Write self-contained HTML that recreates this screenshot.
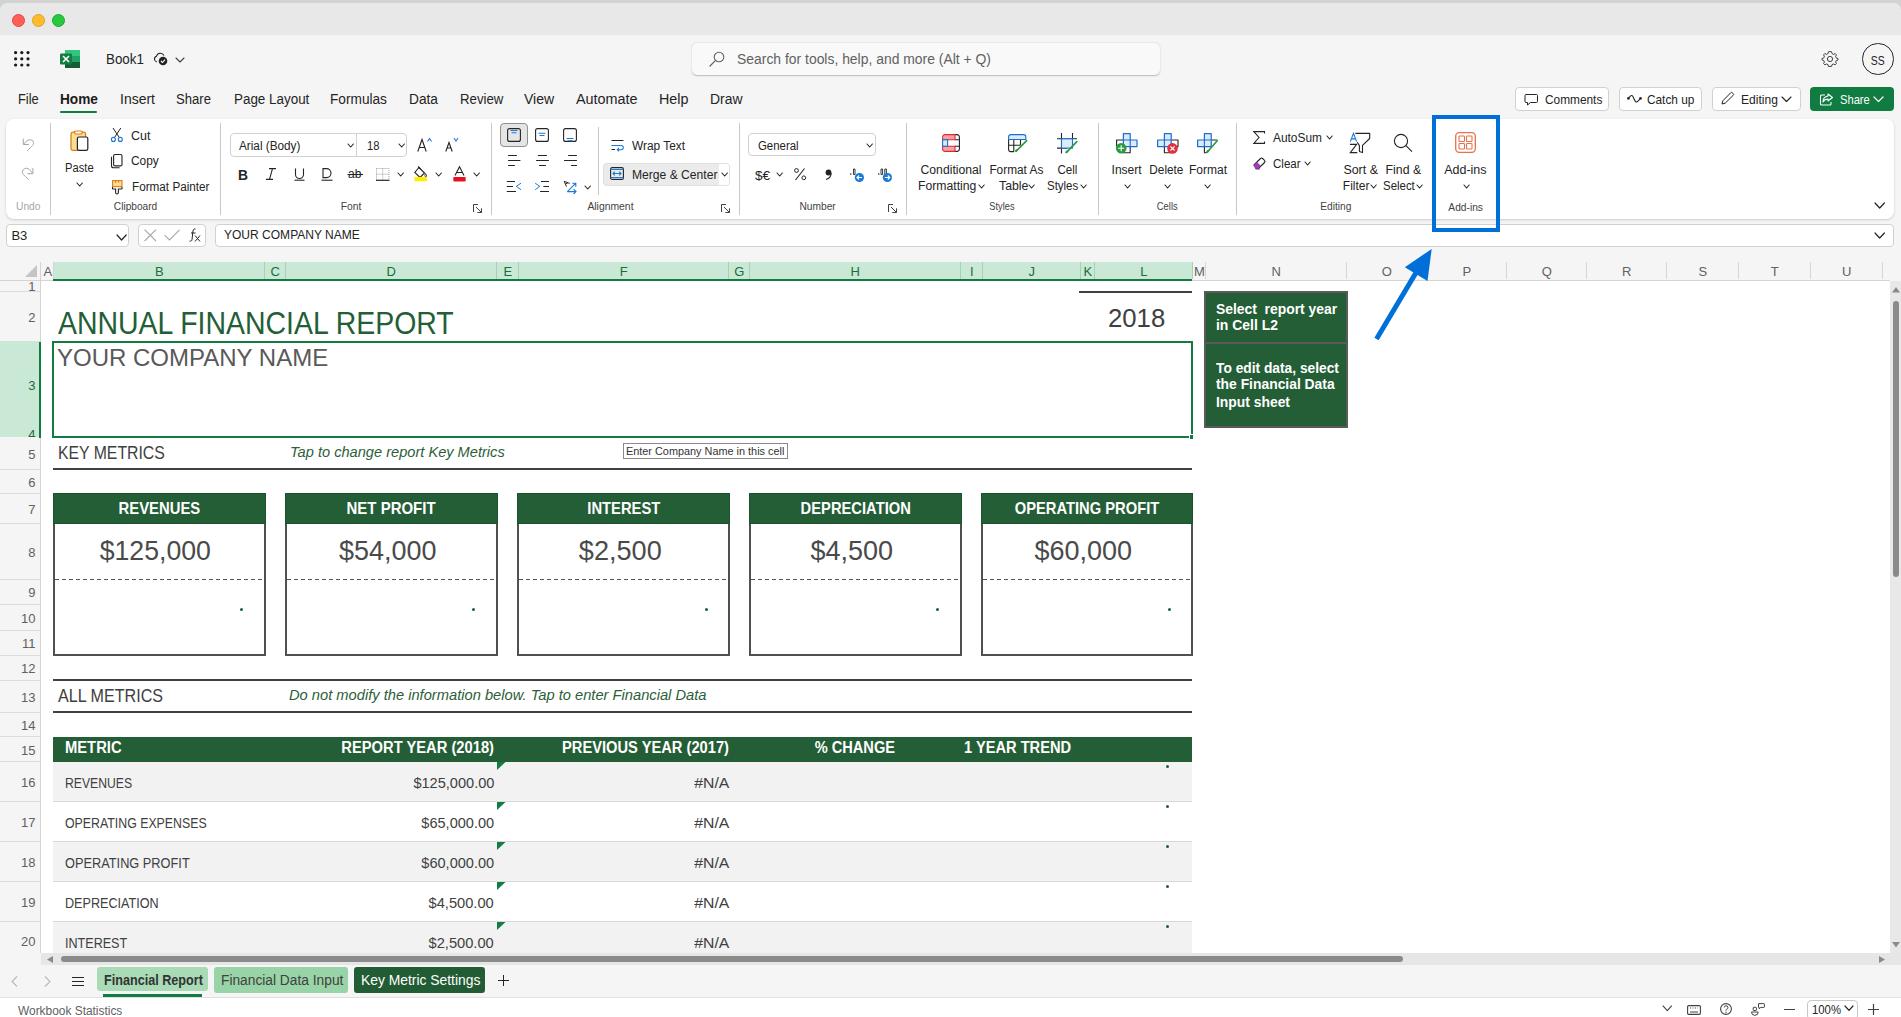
<!DOCTYPE html><html><head><meta charset="utf-8"><style>
html,body{margin:0;padding:0;width:1901px;height:1017px;overflow:hidden;background:#f5f5f5;font-family:"Liberation Sans",sans-serif;position:relative}
body>*{position:absolute}
svg{position:absolute;overflow:visible}
</style></head><body><div style="position:absolute;left:0px;top:0px;width:1901px;height:35px;background:#d2d2d2"></div><div style="position:absolute;left:0px;top:3px;width:1901px;height:32px;background:#e8e8e8;border-radius:7px 7px 0 0"></div><div style="position:absolute;left:11.5px;top:13.5px;width:13px;height:13px;background:#ff5f57;border-radius:50%;box-sizing:border-box;border:0.5px solid #e2463f"></div><div style="position:absolute;left:31.5px;top:13.5px;width:13px;height:13px;background:#febc2e;border-radius:50%;box-sizing:border-box;border:0.5px solid #e1a116"></div><div style="position:absolute;left:51.5px;top:13.5px;width:13px;height:13px;background:#28c840;border-radius:50%;box-sizing:border-box;border:0.5px solid #1aab29"></div><svg style="left:14px;top:51px;" width="16" height="16" viewBox="0 0 16 16"><circle cx="1.6" cy="1.6" r="1.6" fill="#1b1b1b"/><circle cx="1.6" cy="7.8" r="1.6" fill="#1b1b1b"/><circle cx="1.6" cy="14.0" r="1.6" fill="#1b1b1b"/><circle cx="7.8" cy="1.6" r="1.6" fill="#1b1b1b"/><circle cx="7.8" cy="7.8" r="1.6" fill="#1b1b1b"/><circle cx="7.8" cy="14.0" r="1.6" fill="#1b1b1b"/><circle cx="14.0" cy="1.6" r="1.6" fill="#1b1b1b"/><circle cx="14.0" cy="7.8" r="1.6" fill="#1b1b1b"/><circle cx="14.0" cy="14.0" r="1.6" fill="#1b1b1b"/></svg><svg style="left:60px;top:50px;" width="20" height="18" viewBox="0 0 20 18"><rect x="5" y="0" width="15" height="18" rx="1" fill="#21a366"/>
    <rect x="5" y="0" width="15" height="6" rx="1" fill="#33c481"/><rect x="5" y="12" width="15" height="6" fill="#185c37"/><rect x="12" y="6" width="8" height="6" fill="#21a366"/>
    <rect x="5" y="6" width="7" height="6" fill="#107c41"/><rect x="0" y="3.5" width="12" height="11" rx="1" fill="#107c41"/>
    <path d="M3 6 L9 12 M9 6 L3 12" stroke="#fff" stroke-width="1.6"/></svg><span id="t0" style="position:absolute;top:52.15px;font-size:14px;line-height:14px;color:#242424;font-weight:400;white-space:nowrap;font-family:'Liberation Sans', sans-serif;left:105.7px;transform:scaleX(0.9555);transform-origin:left;">Book1</span><svg style="left:153px;top:51px;" width="15" height="15" viewBox="0 0 15 15"><path d="M4 11 A3 3 0 0 1 3.5 5.2 A4 4 0 0 1 11 4.5" fill="none" stroke="#242424" stroke-width="1.1"/><circle cx="10" cy="10" r="4.3" fill="#242424"/><path d="M8 10 L9.5 11.5 L12 8.7" stroke="#fff" stroke-width="1.1" fill="none"/></svg><svg style="left:175.0px;top:57.0px;" width="10" height="6" viewBox="0 0 10 6"><path d="M1 1 L5.0 5 L9 1" fill="none" stroke="#424242" stroke-width="1.1" stroke-linecap="round" stroke-linejoin="round"/></svg><div style="position:absolute;left:692px;top:43px;width:468px;height:32px;background:#f9f9f9;border-radius:5px;box-shadow:0 0.5px 1.5px rgba(0,0,0,0.25)"></div><svg style="left:709px;top:51px;" width="16" height="16" viewBox="0 0 16 16"><circle cx="10" cy="6" r="4.8" fill="none" stroke="#616161" stroke-width="1.1"/><path d="M6.6 9.4 L1 15" stroke="#616161" stroke-width="1.2" stroke-linecap="round"/></svg><span id="t1" style="position:absolute;top:52.15px;font-size:14px;line-height:14px;color:#616161;font-weight:400;white-space:nowrap;font-family:'Liberation Sans', sans-serif;left:737px;transform:scaleX(0.9935);transform-origin:left;">Search for tools, help, and more (Alt + Q)</span><svg style="left:1821px;top:50px;" width="18" height="18" viewBox="0 0 18 18"><circle cx="9" cy="9" r="2.6" fill="none" stroke="#424242" stroke-width="1"/><path d="M9 1.5 L10.6 1.8 L11 3.6 L12.6 4.4 L14.2 3.5 L15.4 4.8 L14.6 6.4 L15.3 8 L17 8.5 V10 L15.3 10.5 L14.6 12 L15.4 13.6 L14.2 14.8 L12.6 14 L11 14.6 L10.6 16.4 H7.4 L7 14.6 L5.4 14 L3.8 14.8 L2.6 13.6 L3.4 12 L2.7 10.5 L1 10 V8.5 L2.7 8 L3.4 6.4 L2.6 4.8 L3.8 3.5 L5.4 4.4 L7 3.6 L7.4 1.8 Z" fill="none" stroke="#424242" stroke-width="1" stroke-linejoin="round"/></svg><div style="position:absolute;left:1862px;top:43px;width:31.5px;height:31.5px;border:1px solid #242424;border-radius:50%;box-sizing:border-box"></div><span id="t2" style="position:absolute;top:53.50px;font-size:13px;line-height:13px;color:#242424;font-weight:400;white-space:nowrap;font-family:'Liberation Sans', sans-serif;left:1869.33px;transform:scaleX(0.8032);transform-origin:center;">SS</span><span id="t3" style="position:absolute;top:92.35px;font-size:14px;line-height:14px;color:#242424;font-weight:400;white-space:nowrap;font-family:'Liberation Sans', sans-serif;left:17.6px;transform:scaleX(0.9174);transform-origin:left;">File</span><span id="t4" style="position:absolute;top:92.35px;font-size:14px;line-height:14px;color:#1b1b1b;font-weight:700;white-space:nowrap;font-family:'Liberation Sans', sans-serif;left:60.4px;transform:scaleX(0.9756);transform-origin:left;">Home</span><span id="t5" style="position:absolute;top:92.35px;font-size:14px;line-height:14px;color:#242424;font-weight:400;white-space:nowrap;font-family:'Liberation Sans', sans-serif;left:120px;">Insert</span><span id="t6" style="position:absolute;top:92.35px;font-size:14px;line-height:14px;color:#242424;font-weight:400;white-space:nowrap;font-family:'Liberation Sans', sans-serif;left:176.4px;transform:scaleX(0.9346);transform-origin:left;">Share</span><span id="t7" style="position:absolute;top:92.35px;font-size:14px;line-height:14px;color:#242424;font-weight:400;white-space:nowrap;font-family:'Liberation Sans', sans-serif;left:233.6px;transform:scaleX(0.9582);transform-origin:left;">Page Layout</span><span id="t8" style="position:absolute;top:92.35px;font-size:14px;line-height:14px;color:#242424;font-weight:400;white-space:nowrap;font-family:'Liberation Sans', sans-serif;left:330.4px;transform:scaleX(0.9760);transform-origin:left;">Formulas</span><span id="t9" style="position:absolute;top:92.35px;font-size:14px;line-height:14px;color:#242424;font-weight:400;white-space:nowrap;font-family:'Liberation Sans', sans-serif;left:409px;transform:scaleX(0.9791);transform-origin:left;">Data</span><span id="t10" style="position:absolute;top:92.35px;font-size:14px;line-height:14px;color:#242424;font-weight:400;white-space:nowrap;font-family:'Liberation Sans', sans-serif;left:459.6px;transform:scaleX(0.9438);transform-origin:left;">Review</span><span id="t11" style="position:absolute;top:92.35px;font-size:14px;line-height:14px;color:#242424;font-weight:400;white-space:nowrap;font-family:'Liberation Sans', sans-serif;left:524.4px;transform:scaleX(1.0030);transform-origin:left;">View</span><span id="t12" style="position:absolute;top:92.35px;font-size:14px;line-height:14px;color:#242424;font-weight:400;white-space:nowrap;font-family:'Liberation Sans', sans-serif;left:576px;transform:scaleX(1.0279);transform-origin:left;">Automate</span><span id="t13" style="position:absolute;top:92.35px;font-size:14px;line-height:14px;color:#242424;font-weight:400;white-space:nowrap;font-family:'Liberation Sans', sans-serif;left:659px;transform:scaleX(1.0210);transform-origin:left;">Help</span><span id="t14" style="position:absolute;top:92.35px;font-size:14px;line-height:14px;color:#242424;font-weight:400;white-space:nowrap;font-family:'Liberation Sans', sans-serif;left:710px;transform:scaleX(0.9971);transform-origin:left;">Draw</span><div style="position:absolute;left:60px;top:110.5px;width:37px;height:2.5px;background:#107c41;border-radius:2px"></div><div style="position:absolute;left:1515.4px;top:87.2px;width:93.89999999999986px;height:23.5px;background:#fff;border:1px solid #d1d1d1;border-radius:4px;box-sizing:border-box"></div><svg style="left:1524px;top:92px;" width="14" height="14" viewBox="0 0 14 14"><path d="M2 2.5 H12.5 A1 1 0 0 1 13.5 3.5 V9.5 A1 1 0 0 1 12.5 10.5 H6.5 L3.5 13 V10.5 H2 A1 1 0 0 1 1 9.5 V3.5 A1 1 0 0 1 2 2.5 Z" fill="none" stroke="#242424" stroke-width="1"/></svg><span id="t15" style="position:absolute;top:93.00px;font-size:13px;line-height:13px;color:#242424;font-weight:400;white-space:nowrap;font-family:'Liberation Sans', sans-serif;left:1544.5px;transform:scaleX(0.9120);transform-origin:left;">Comments</span><div style="position:absolute;left:1618.6px;top:87.2px;width:83.80000000000018px;height:23.5px;background:#fff;border:1px solid #d1d1d1;border-radius:4px;box-sizing:border-box"></div><svg style="left:1626px;top:93px;" width="17" height="12" viewBox="0 0 17 12"><path d="M2.4 5.4 C3.5 4 4.5 2.2 6 2.5 C7.5 3 8.5 9 10.5 9 C12 9 13 6.5 14.5 5.4" fill="none" stroke="#242424" stroke-width="1.1"/><circle cx="2.4" cy="5.4" r="1.3" fill="#242424"/><circle cx="14.5" cy="5.4" r="1.3" fill="#242424"/></svg><span id="t16" style="position:absolute;top:93.00px;font-size:13px;line-height:13px;color:#242424;font-weight:400;white-space:nowrap;font-family:'Liberation Sans', sans-serif;left:1647px;transform:scaleX(0.9093);transform-origin:left;">Catch up</span><div style="position:absolute;left:1711.5px;top:87.2px;width:89.79999999999995px;height:23.5px;background:#fff;border:1px solid #d1d1d1;border-radius:4px;box-sizing:border-box"></div><svg style="left:1720px;top:91px;" width="15" height="15" viewBox="0 0 15 15"><path d="M2 13 L2.8 9.8 L10.5 2 A1.3 1.3 0 0 1 12.6 2 L13 2.4 A1.3 1.3 0 0 1 13 4.5 L5.2 12.2 Z" fill="none" stroke="#242424" stroke-width="1"/></svg><span id="t17" style="position:absolute;top:93.00px;font-size:13px;line-height:13px;color:#242424;font-weight:400;white-space:nowrap;font-family:'Liberation Sans', sans-serif;left:1741px;transform:scaleX(0.9269);transform-origin:left;">Editing</span><svg style="left:1780.5px;top:95.75px;" width="11" height="6.5" viewBox="0 0 11 6.5"><path d="M1 1 L5.5 5.5 L10 1" fill="none" stroke="#242424" stroke-width="1.1" stroke-linecap="round" stroke-linejoin="round"/></svg><div style="position:absolute;left:1810px;top:87.2px;width:83.70000000000005px;height:23.5px;background:#107c41;border-radius:4px"></div><svg style="left:1819px;top:92px;" width="15" height="14" viewBox="0 0 15 14"><path d="M6 3 H2.5 A1 1 0 0 0 1.5 4 V12 A1 1 0 0 0 2.5 13 H11 A1 1 0 0 0 12 12 V10" fill="none" stroke="#fff" stroke-width="1.1"/><path d="M9 2 L13.5 5.5 L9 9 V7 C6.5 7 5 8 4 10 C4 6.5 6 4.5 9 4 Z" fill="none" stroke="#fff" stroke-width="1.1" stroke-linejoin="round"/></svg><span id="t18" style="position:absolute;top:93.00px;font-size:13px;line-height:13px;color:#fff;font-weight:400;white-space:nowrap;font-family:'Liberation Sans', sans-serif;left:1839.5px;transform:scaleX(0.8582);transform-origin:left;">Share</span><svg style="left:1873.0px;top:95.75px;" width="11" height="6.5" viewBox="0 0 11 6.5"><path d="M1 1 L5.5 5.5 L10 1" fill="none" stroke="#fff" stroke-width="1.2" stroke-linecap="round" stroke-linejoin="round"/></svg><div style="position:absolute;left:6px;top:119px;width:1887.5px;height:100px;background:#fff;border-radius:8px;box-shadow:0 1px 2.5px rgba(0,0,0,0.18)"></div><svg style="left:20px;top:136px;" width="16" height="16" viewBox="0 0 16 16"><path d="M3.3 2.6 V8.5 H8.8" fill="none" stroke="#a6a6a6" stroke-width="1"/><path d="M3.8 8 C6 5 8 3.8 10 3.8 C12.5 3.8 14 5.5 13.6 7.5 C13.3 9 12 10 7.3 14.8" fill="none" stroke="#a6a6a6" stroke-width="1"/></svg><svg style="left:20px;top:165px;" width="16" height="16" viewBox="0 0 16 16"><path d="M12.9 3.1 V8.7 H7.3" fill="none" stroke="#a6a6a6" stroke-width="1"/><path d="M12.4 8.2 C10.5 5.5 8.5 3.3 6.5 3.2 C4 3.2 2 5.5 2.4 7.7 C2.7 9 4 10.5 8.8 14.6" fill="none" stroke="#a6a6a6" stroke-width="1"/></svg><span id="t19" style="position:absolute;top:201.49px;font-size:11px;line-height:11px;color:#a6a6a6;font-weight:400;white-space:nowrap;font-family:'Liberation Sans', sans-serif;left:16.3px;transform:scaleX(0.9284);transform-origin:left;">Undo</span><div style="position:absolute;left:50px;top:123px;width:1px;height:92px;background:#c8c8c8"></div><svg style="left:70px;top:130px;" width="19" height="21" viewBox="0 0 19 21"><rect x="1" y="2.2" width="14.6" height="18.2" rx="2" fill="#f8de96" stroke="#e07a12" stroke-width="1.2"/><rect x="4.6" y="1" width="7.6" height="3" rx="1.2" fill="#fff" stroke="#e07a12" stroke-width="1.2"/><rect x="7.4" y="7" width="10.4" height="13.4" rx="1.6" fill="#fff" stroke="#242424" stroke-width="1.2"/></svg><span id="t20" style="position:absolute;top:162.24px;font-size:12px;line-height:12px;color:#242424;font-weight:400;white-space:nowrap;font-family:'Liberation Sans', sans-serif;left:63.86px;transform:scaleX(0.9281);transform-origin:center;">Paste</span><svg style="left:75.8px;top:182.2px;" width="7.4" height="5" viewBox="0 0 7.4 5"><path d="M1 1 L3.7 4 L6.4 1" fill="none" stroke="#242424" stroke-width="1.1" stroke-linecap="round" stroke-linejoin="round"/></svg><svg style="left:111px;top:127px;" width="13" height="15" viewBox="0 0 13 15"><path d="M2 1 L8.4 10.6 M9.8 1 L3.4 10.6" stroke="#242424" stroke-width="1"/><circle cx="2.4" cy="12.4" r="2" fill="none" stroke="#1a7ad4" stroke-width="1.1"/><circle cx="9.3" cy="12.4" r="2" fill="none" stroke="#1a7ad4" stroke-width="1.1"/></svg><span id="t21" style="position:absolute;top:129.64px;font-size:12px;line-height:12px;color:#242424;font-weight:400;white-space:nowrap;font-family:'Liberation Sans', sans-serif;left:131.3px;transform:scaleX(1.0366);transform-origin:left;">Cut</span><svg style="left:111px;top:154px;" width="12" height="15" viewBox="0 0 12 15"><rect x="2.6" y="0.5" width="8.4" height="11.4" rx="1.4" fill="none" stroke="#242424" stroke-width="1.1"/><path d="M0.5 2.8 V11.8 A2 2 0 0 0 2.5 13.8 H8.6" fill="none" stroke="#242424" stroke-width="1.1"/></svg><span id="t22" style="position:absolute;top:155.44px;font-size:12px;line-height:12px;color:#242424;font-weight:400;white-space:nowrap;font-family:'Liberation Sans', sans-serif;left:131.3px;transform:scaleX(0.9935);transform-origin:left;">Copy</span><svg style="left:112px;top:180px;" width="11" height="15" viewBox="0 0 11 15"><rect x="0.6" y="0.6" width="9.4" height="6" fill="#f8de96" stroke="#e07a12" stroke-width="1.1"/><path d="M3.6 0.6 V3 M6.6 0.6 V2.5" stroke="#e07a12" stroke-width="1"/><path d="M0.5 7 V8.5 A0.5 0.5 0 0 0 1 9 H3.6 V12.6 A1.4 1.4 0 0 0 6.4 12.6 V9 H9.5 A0.5 0.5 0 0 0 10 8.5 V7" fill="none" stroke="#242424" stroke-width="1.1"/></svg><span id="t23" style="position:absolute;top:181.44px;font-size:12px;line-height:12px;color:#242424;font-weight:400;white-space:nowrap;font-family:'Liberation Sans', sans-serif;left:131.6px;transform:scaleX(0.9768);transform-origin:left;">Format Painter</span><span id="t24" style="position:absolute;top:201.49px;font-size:11px;line-height:11px;color:#424242;font-weight:400;white-space:nowrap;font-family:'Liberation Sans', sans-serif;left:112.15px;transform:scaleX(0.9218);transform-origin:center;">Clipboard</span><div style="position:absolute;left:220px;top:123px;width:1px;height:92px;background:#c8c8c8"></div><div style="position:absolute;left:229.6px;top:133.2px;width:177.8px;height:23.4px;border:1px solid #d1d1d1;border-radius:4px;box-sizing:border-box;background:#fff"></div><div style="position:absolute;left:356px;top:133.2px;width:1px;height:23.4px;background:#d1d1d1"></div><span id="t25" style="position:absolute;top:139.54px;font-size:12px;line-height:12px;color:#242424;font-weight:400;white-space:nowrap;font-family:'Liberation Sans', sans-serif;left:238.9px;transform:scaleX(0.9798);transform-origin:left;">Arial (Body)</span><svg style="left:346.90000000000003px;top:143.1px;" width="7.4" height="5" viewBox="0 0 7.4 5"><path d="M1 1 L3.7 4 L6.4 1" fill="none" stroke="#242424" stroke-width="1.1" stroke-linecap="round" stroke-linejoin="round"/></svg><span id="t26" style="position:absolute;top:139.54px;font-size:12px;line-height:12px;color:#242424;font-weight:400;white-space:nowrap;font-family:'Liberation Sans', sans-serif;left:366.6px;transform:scaleX(0.9346);transform-origin:left;">18</span><svg style="left:397.8px;top:143.1px;" width="7.4" height="5" viewBox="0 0 7.4 5"><path d="M1 1 L3.7 4 L6.4 1" fill="none" stroke="#242424" stroke-width="1.1" stroke-linecap="round" stroke-linejoin="round"/></svg><svg style="left:417px;top:137px;" width="16" height="15" viewBox="0 0 16 15"><path d="M0.8 14.5 L5 2.5 L9.2 14.5 M2.3 10.5 H7.7" fill="none" stroke="#242424" stroke-width="1.1"/><path d="M10.5 4.5 L12.5 1.5 L14.5 4.5" fill="none" stroke="#1a7ad4" stroke-width="1.1"/></svg><svg style="left:444.5px;top:137px;" width="16" height="15" viewBox="0 0 16 15"><path d="M0.8 14.5 L4 5.5 L7.2 14.5 M2 11 H6" fill="none" stroke="#242424" stroke-width="1.1"/><path d="M9 1 L11 4 L13 1" fill="none" stroke="#1a7ad4" stroke-width="1.1"/></svg><span id="t27" style="position:absolute;top:166.90px;font-size:15px;line-height:15px;color:#242424;font-weight:700;white-space:nowrap;font-family:'Liberation Sans', sans-serif;left:238.2px;transform:scaleX(0.9190);transform-origin:left;">B</span><svg style="left:265px;top:168px;" width="12" height="12" viewBox="0 0 12 12"><path d="M4 0.6 H11 M1 11.4 H8 M7.5 0.6 L4.5 11.4" fill="none" stroke="#242424" stroke-width="1.1"/></svg><svg style="left:293.5px;top:168px;" width="11" height="13" viewBox="0 0 11 13"><path d="M1.5 0.5 V6.5 A4 4 0 0 0 9.5 6.5 V0.5" fill="none" stroke="#242424" stroke-width="1.1"/><path d="M0.5 12.2 H10.5" stroke="#242424" stroke-width="1.1"/></svg><svg style="left:321px;top:168px;" width="12" height="13" viewBox="0 0 12 13"><path d="M2 0.6 H5.5 A4.5 4.5 0 0 1 5.5 9.6 H2 Z" fill="none" stroke="#242424" stroke-width="1.1"/><path d="M0.5 12.2 H11.5" stroke="#242424" stroke-width="1.1"/></svg><svg style="left:346.5px;top:167px;" width="17" height="14" viewBox="0 0 17 14"><text x="1" y="11" font-family="Liberation Sans" font-size="12" fill="#242424">ab</text><path d="M0.5 7.5 H16" stroke="#242424" stroke-width="1.1"/></svg><svg style="left:375.8px;top:167.5px;" width="14" height="13" viewBox="0 0 14 13"><path d="M0.5 0.5 H13 V12 M0.5 0.5 V12 M6.7 0.5 V12 M0.5 6.2 H13" fill="none" stroke="#8a8a8a" stroke-width="0.8" stroke-dasharray="1 1"/><path d="M0 12.3 H13.5" stroke="#242424" stroke-width="1.2"/></svg><svg style="left:396.8px;top:171.5px;" width="7.4" height="5" viewBox="0 0 7.4 5"><path d="M1 1 L3.7 4 L6.4 1" fill="none" stroke="#242424" stroke-width="1.1" stroke-linecap="round" stroke-linejoin="round"/></svg><svg style="left:414px;top:166px;" width="14" height="16" viewBox="0 0 14 16"><path d="M5 1.5 L10.5 7 L6 11.5 L0.8 6.5 Z" fill="none" stroke="#242424" stroke-width="1.1"/><path d="M4 0.5 L6.5 3" stroke="#242424" stroke-width="1.1"/><path d="M11.5 7.5 C12.5 9 13 10 12 10.8 C11 11 10.5 9.5 11.5 7.5Z" fill="none" stroke="#242424" stroke-width="0.9"/><rect x="0.5" y="11" width="12.5" height="4.2" rx="0.6" fill="#ffee00"/></svg><svg style="left:435.1px;top:171.5px;" width="7.4" height="5" viewBox="0 0 7.4 5"><path d="M1 1 L3.7 4 L6.4 1" fill="none" stroke="#242424" stroke-width="1.1" stroke-linecap="round" stroke-linejoin="round"/></svg><svg style="left:452.5px;top:166px;" width="13" height="16" viewBox="0 0 13 16"><path d="M2 9.5 L6.5 0.8 L11 9.5 M3.5 6.5 H9.5" fill="none" stroke="#242424" stroke-width="1.1"/><rect x="0.3" y="11" width="12.4" height="4.4" rx="0.8" fill="#e81123"/></svg><svg style="left:472.8px;top:171.5px;" width="7.4" height="5" viewBox="0 0 7.4 5"><path d="M1 1 L3.7 4 L6.4 1" fill="none" stroke="#242424" stroke-width="1.1" stroke-linecap="round" stroke-linejoin="round"/></svg><span id="t28" style="position:absolute;top:201.49px;font-size:11px;line-height:11px;color:#424242;font-weight:400;white-space:nowrap;font-family:'Liberation Sans', sans-serif;left:339.69px;transform:scaleX(0.9367);transform-origin:center;">Font</span><svg style="left:472.5px;top:203.5px;" width="9" height="9" viewBox="0 0 9 9"><path d="M0.5 8 V0.5 H5" fill="none" stroke="#424242" stroke-width="1"/><path d="M3 3 L8.3 8.3 M4.3 8.5 H8.5 V4.3" fill="none" stroke="#424242" stroke-width="1"/></svg><div style="position:absolute;left:491px;top:123px;width:1px;height:92px;background:#c8c8c8"></div><div style="position:absolute;left:500.3px;top:123.3px;width:27.6px;height:23.4px;background:#e5e5e5;border:1px solid #8f8f8f;border-radius:4px;box-sizing:border-box"></div><svg style="left:507px;top:128.3px;" width="14" height="14" viewBox="0 0 14 14"><rect x="0.6" y="0.6" width="12.8" height="12.8" rx="2" fill="none" stroke="#242424" stroke-width="1.1"/><path d="M3.5 2.5 H10.5 M4.5 4.7 H9.5" stroke="#1a7ad4" stroke-width="1.1"/></svg><svg style="left:535px;top:128.3px;" width="14" height="14" viewBox="0 0 14 14"><rect x="0.6" y="0.6" width="12.8" height="12.8" rx="2" fill="none" stroke="#242424" stroke-width="1.1"/><path d="M3.5 5.3 H10.5 M4.5 7.5 H9.5" stroke="#1a7ad4" stroke-width="1.1"/></svg><svg style="left:563px;top:128.3px;" width="14" height="14" viewBox="0 0 14 14"><rect x="0.6" y="0.6" width="12.8" height="12.8" rx="2" fill="none" stroke="#242424" stroke-width="1.1"/><path d="M3.5 10.5 H10.5 M4.5 12.7 H9.5" stroke="#1a7ad4" stroke-width="1.1"/></svg><svg style="left:507.8px;top:155px;" width="13" height="12" viewBox="0 0 13 12"><path d="M0.5 0.5 H8.5 M0.5 5.5 H12 M0.5 10.5 H6.5" stroke="#242424" stroke-width="1.1" stroke-linecap="round"/></svg><svg style="left:535.5px;top:155px;" width="13" height="12" viewBox="0 0 13 12"><path d="M2.4 0.5 H10.5 M0.5 5.5 H12.5 M3.5 10.5 H9.5" stroke="#242424" stroke-width="1.1" stroke-linecap="round"/></svg><svg style="left:563.5px;top:155px;" width="13" height="12" viewBox="0 0 13 12"><path d="M4.6 0.5 H12.5 M0.5 5.5 H12.5 M7.5 10.5 H12.5" stroke="#242424" stroke-width="1.1" stroke-linecap="round"/></svg><svg style="left:506px;top:181px;" width="16" height="12" viewBox="0 0 16 12"><path d="M0.8 0.5 H9 M0.8 5.5 H7 M0.8 10.5 H10" stroke="#242424" stroke-width="1.1"/><path d="M15 2.2 L10.3 5.3 L15 8.7" fill="none" stroke="#1a7ad4" stroke-width="1"/></svg><svg style="left:534px;top:181px;" width="16" height="12" viewBox="0 0 16 12"><path d="M7 0.5 H15 M9.4 5.5 H15 M6 10.5 H15" stroke="#242424" stroke-width="1.1"/><path d="M1.2 2.2 L5.7 5.3 L1.2 8.7" fill="none" stroke="#1a7ad4" stroke-width="1"/></svg><svg style="left:563px;top:180px;" width="15" height="16" viewBox="0 0 15 16"><path d="M1.2 1.3 L6.7 3.4 M1.2 1.3 L3.5 6.6 M2.4 4 L5 2.7" fill="none" stroke="#242424" stroke-width="1"/><path d="M4.3 11.6 L12.8 3.2 M9.3 3.2 H12.8 V6.7 M4.3 11.6 H13 M10.6 9.2 L13 11.6 L10.6 14" fill="none" stroke="#1a7ad4" stroke-width="1.1"/></svg><svg style="left:583.9px;top:184.5px;" width="7.4" height="5" viewBox="0 0 7.4 5"><path d="M1 1 L3.7 4 L6.4 1" fill="none" stroke="#242424" stroke-width="1.1" stroke-linecap="round" stroke-linejoin="round"/></svg><div style="position:absolute;left:598px;top:127px;width:1px;height:68px;background:#c8c8c8"></div><svg style="left:610.7px;top:139.5px;" width="13" height="13" viewBox="0 0 13 13"><path d="M0.5 0.5 H12.5 M0.5 9.5 H4" stroke="#242424" stroke-width="1.1"/><path d="M0.5 5.5 H10.2 A2.1 2.1 0 0 1 10.2 9.7 H6.3 M8 8 L6.3 9.7 L8 11.4" fill="none" stroke="#1a7ad4" stroke-width="1.1"/></svg><span id="t29" style="position:absolute;top:139.84px;font-size:12px;line-height:12px;color:#242424;font-weight:400;white-space:nowrap;font-family:'Liberation Sans', sans-serif;left:631.8px;transform:scaleX(0.9898);transform-origin:left;">Wrap Text</span><div style="position:absolute;left:603.4px;top:162.5px;width:127px;height:23.2px;background:#ebebeb;border:1px solid #e0e0e0;border-radius:4px;box-sizing:border-box"></div><div style="position:absolute;left:718.5px;top:163.5px;width:10.9px;height:21.2px;background:#fff;border-radius:0 3px 3px 0"></div><svg style="left:610px;top:167px;" width="14" height="13" viewBox="0 0 14 13"><rect x="0.6" y="0.6" width="12.8" height="11.8" rx="1.5" fill="none" stroke="#242424" stroke-width="1.1"/><path d="M0.6 2.5 H13.4 M0.6 10.5 H13.4" stroke="#1a7ad4" stroke-width="1.1"/><path d="M3 6.5 H11 M4.8 4.7 L3 6.5 L4.8 8.3 M9.2 4.7 L11 6.5 L9.2 8.3" fill="none" stroke="#1a7ad4" stroke-width="1.1"/></svg><span id="t30" style="position:absolute;top:168.64px;font-size:12px;line-height:12px;color:#242424;font-weight:400;white-space:nowrap;font-family:'Liberation Sans', sans-serif;left:632.3px;transform:scaleX(1.0088);transform-origin:left;">Merge &amp; Center</span><svg style="left:721.0px;top:172.0px;" width="7.4" height="5" viewBox="0 0 7.4 5"><path d="M1 1 L3.7 4 L6.4 1" fill="none" stroke="#242424" stroke-width="1.1" stroke-linecap="round" stroke-linejoin="round"/></svg><span id="t31" style="position:absolute;top:201.49px;font-size:11px;line-height:11px;color:#424242;font-weight:400;white-space:nowrap;font-family:'Liberation Sans', sans-serif;left:585.54px;transform:scaleX(0.9429);transform-origin:center;">Alignment</span><svg style="left:721px;top:203.5px;" width="9" height="9" viewBox="0 0 9 9"><path d="M0.5 8 V0.5 H5" fill="none" stroke="#424242" stroke-width="1"/><path d="M3 3 L8.3 8.3 M4.3 8.5 H8.5 V4.3" fill="none" stroke="#424242" stroke-width="1"/></svg><div style="position:absolute;left:739px;top:123px;width:1px;height:92px;background:#c8c8c8"></div><div style="position:absolute;left:748.3px;top:133.2px;width:127.3px;height:23.3px;border:1px solid #d1d1d1;border-radius:4px;box-sizing:border-box;background:#fff"></div><span id="t32" style="position:absolute;top:139.84px;font-size:12px;line-height:12px;color:#242424;font-weight:400;white-space:nowrap;font-family:'Liberation Sans', sans-serif;left:757.6px;transform:scaleX(0.9507);transform-origin:left;">General</span><svg style="left:865.8px;top:143.0px;" width="7.4" height="5" viewBox="0 0 7.4 5"><path d="M1 1 L3.7 4 L6.4 1" fill="none" stroke="#242424" stroke-width="1.1" stroke-linecap="round" stroke-linejoin="round"/></svg><span id="t33" style="position:absolute;top:168.70px;font-size:13px;line-height:13px;color:#242424;font-weight:400;white-space:nowrap;font-family:'Liberation Sans', sans-serif;left:754.5px;transform:scaleX(1.0473);transform-origin:left;">$€</span><svg style="left:775.8px;top:172.0px;" width="7.4" height="5" viewBox="0 0 7.4 5"><path d="M1 1 L3.7 4 L6.4 1" fill="none" stroke="#242424" stroke-width="1.1" stroke-linecap="round" stroke-linejoin="round"/></svg><svg style="left:793.8px;top:168px;" width="13" height="13" viewBox="0 0 13 13"><circle cx="2.5" cy="2.5" r="1.9" fill="none" stroke="#242424" stroke-width="1"/><circle cx="9.8" cy="9.8" r="1.9" fill="none" stroke="#242424" stroke-width="1"/><path d="M10.5 0.5 L1.5 12" stroke="#242424" stroke-width="1.1"/></svg><svg style="left:824.5px;top:169px;" width="7" height="11" viewBox="0 0 7 11"><circle cx="3.5" cy="3.5" r="2.9" fill="#242424"/><path d="M6.2 4 C6.2 7.5 4.5 9.5 1 10.5" fill="none" stroke="#242424" stroke-width="1.1"/></svg><svg style="left:850px;top:168px;" width="15" height="15" viewBox="0 0 15 15"><circle cx="0.8" cy="6" r="0.8" fill="#242424"/><path d="M3.5 1 H5 V6.5 H3.5 Z" fill="none" stroke="#242424" stroke-width="0.9"/><circle cx="9.4" cy="9.5" r="4.6" fill="#1a7ad4"/><path d="M7 9.5 H12 M9 7.5 L7 9.5 L9 11.5" fill="none" stroke="#fff" stroke-width="1.1"/></svg><svg style="left:878px;top:168px;" width="15" height="15" viewBox="0 0 15 15"><circle cx="0.8" cy="6" r="0.8" fill="#242424"/><path d="M3 1 H4.6 V6.5 H3 Z M6.8 1 H8.4 V6.5 H6.8 Z" fill="none" stroke="#242424" stroke-width="0.9"/><circle cx="9.4" cy="9.5" r="4.6" fill="#1a7ad4"/><path d="M6.8 9.5 H11.8 M9.8 7.5 L11.8 9.5 L9.8 11.5" fill="none" stroke="#fff" stroke-width="1.1"/></svg><span id="t34" style="position:absolute;top:201.49px;font-size:11px;line-height:11px;color:#424242;font-weight:400;white-space:nowrap;font-family:'Liberation Sans', sans-serif;left:797.94px;transform:scaleX(0.9282);transform-origin:center;">Number</span><svg style="left:888px;top:203.5px;" width="9" height="9" viewBox="0 0 9 9"><path d="M0.5 8 V0.5 H5" fill="none" stroke="#424242" stroke-width="1"/><path d="M3 3 L8.3 8.3 M4.3 8.5 H8.5 V4.3" fill="none" stroke="#424242" stroke-width="1"/></svg><div style="position:absolute;left:906px;top:123px;width:1px;height:92px;background:#c8c8c8"></div><svg style="left:942px;top:134px;" width="18" height="18" viewBox="0 0 18 18"><path d="M13 0.6 H15 A2.4 2.4 0 0 1 17.4 3 V15 A2.4 2.4 0 0 1 15 17.4 H13 M13 5.8 H17.4 M13 12.2 H17.4" fill="none" stroke="#242424" stroke-width="1.1"/><path d="M13 5.8 H0.6 V3 A2.4 2.4 0 0 1 3 0.6 H13 Z" fill="#f7a1a8" stroke="#e02b2b" stroke-width="1.1"/><path d="M13 12.2 H0.6 V15 A2.4 2.4 0 0 0 3 17.4 H13 Z" fill="#f7a1a8" stroke="#e02b2b" stroke-width="1.1"/><rect x="0.6" y="5.8" width="5" height="6.4" fill="#dcebf9" stroke="#1a6fce" stroke-width="1.1"/></svg><span id="t35" style="position:absolute;top:163.94px;font-size:12px;line-height:12px;color:#242424;font-weight:400;white-space:nowrap;font-family:'Liberation Sans', sans-serif;left:921.28px;transform:scaleX(1.0168);transform-origin:center;">Conditional</span><span id="t36" style="position:absolute;top:179.84px;font-size:12px;line-height:12px;color:#242424;font-weight:400;white-space:nowrap;font-family:'Liberation Sans', sans-serif;left:917.5px;transform:scaleX(1.0174);transform-origin:left;">Formatting</span><svg style="left:978.1999999999999px;top:184.0px;" width="7.2" height="5" viewBox="0 0 7.2 5"><path d="M1 1 L3.6 4 L6.2 1" fill="none" stroke="#242424" stroke-width="1.1" stroke-linecap="round" stroke-linejoin="round"/></svg><svg style="left:1008px;top:134px;" width="21" height="19" viewBox="0 0 21 19"><path d="M0.6 5.5 V15.2 A2.4 2.4 0 0 0 3 17.6 H6 M0.6 11.2 H12.5 M5.8 5.5 V17.6 M12.5 5.5 V11.2" fill="none" stroke="#242424" stroke-width="1.1"/><path d="M0.6 5.5 V2.8 A2.2 2.2 0 0 1 2.8 0.6 H15.6 A2.2 2.2 0 0 1 17.8 2.8 V5.5 Z" fill="#dcebf9" stroke="#1a6fce" stroke-width="1.1"/><path d="M8.2 17.2 L18.6 6.6" stroke="#2b9a3e" stroke-width="1.7" stroke-linecap="round"/><path d="M6.999999999999999 17.8 C6.999999999999999 15.6 8.399999999999999 14.6 10.0 15.6 C9.799999999999999 17.4 8.799999999999999 18.0 6.999999999999999 17.8 Z" fill="#2b9a3e"/></svg><span id="t37" style="position:absolute;top:163.94px;font-size:12px;line-height:12px;color:#242424;font-weight:400;white-space:nowrap;font-family:'Liberation Sans', sans-serif;left:989.46px;transform:scaleX(0.9861);transform-origin:center;">Format As</span><span id="t38" style="position:absolute;top:179.84px;font-size:12px;line-height:12px;color:#242424;font-weight:400;white-space:nowrap;font-family:'Liberation Sans', sans-serif;left:998.5px;transform:scaleX(1.0234);transform-origin:left;">Table</span><svg style="left:1027.9px;top:184.0px;" width="7.2" height="5" viewBox="0 0 7.2 5"><path d="M1 1 L3.6 4 L6.2 1" fill="none" stroke="#242424" stroke-width="1.1" stroke-linecap="round" stroke-linejoin="round"/></svg><svg style="left:1056.9px;top:132.5px;" width="21" height="21" viewBox="0 0 21 21"><path d="M4.5 0 V20.5 M15.5 0 V5.8 M0 5.8 H20 M0 15.1 H10" fill="none" stroke="#242424" stroke-width="1.1"/><rect x="4.5" y="5.8" width="11" height="9.3" fill="#dcebf9" stroke="#1a6fce" stroke-width="1.1"/><path d="M9.5 19.4 L19.8 8.6" stroke="#2b9a3e" stroke-width="1.7" stroke-linecap="round"/><path d="M8.3 20.0 C8.3 17.799999999999997 9.7 16.799999999999997 11.3 17.799999999999997 C11.1 19.599999999999998 10.1 20.2 8.3 20.0 Z" fill="#2b9a3e"/></svg><span id="t39" style="position:absolute;top:163.94px;font-size:12px;line-height:12px;color:#242424;font-weight:400;white-space:nowrap;font-family:'Liberation Sans', sans-serif;left:1057.16px;transform:scaleX(0.9631);transform-origin:center;">Cell</span><span id="t40" style="position:absolute;top:179.84px;font-size:12px;line-height:12px;color:#242424;font-weight:400;white-space:nowrap;font-family:'Liberation Sans', sans-serif;left:1047.3px;transform:scaleX(0.9545);transform-origin:left;">Styles</span><svg style="left:1079.9px;top:184.0px;" width="7.2" height="5" viewBox="0 0 7.2 5"><path d="M1 1 L3.6 4 L6.2 1" fill="none" stroke="#242424" stroke-width="1.1" stroke-linecap="round" stroke-linejoin="round"/></svg><span id="t41" style="position:absolute;top:201.49px;font-size:11px;line-height:11px;color:#424242;font-weight:400;white-space:nowrap;font-family:'Liberation Sans', sans-serif;left:987.22px;transform:scaleX(0.8425);transform-origin:center;">Styles</span><div style="position:absolute;left:1098px;top:123px;width:1px;height:92px;background:#c8c8c8"></div><svg style="left:1116.2px;top:133px;" width="22" height="21" viewBox="0 0 22 21"><path d="M7.4 7 H0.6 V13.6 M7.4 13.6 V19.8 H14.2 V13.6" fill="none" stroke="#242424" stroke-width="1.1" stroke-linejoin="round"/><path d="M7.4 0.6 H14.2 V7 H21 V13.6 H7.4 Z" fill="#dcebf9" stroke="#1a6fce" stroke-width="1.2" stroke-linejoin="round"/><path d="M7.4 7 H14.2 V13.6" fill="none" stroke="#1a6fce" stroke-width="1.1"/><circle cx="5.2" cy="15.3" r="5.3" fill="#2b9a3e"/><path d="M5.2 12.3 V18.3 M2.2 15.3 H8.2" stroke="#fff" stroke-width="1.1"/></svg><svg style="left:1157px;top:133px;" width="22" height="21" viewBox="0 0 22 21"><path d="M14.2 7 H21 V13.6 H14.2 M7.4 13.6 V19.8 H14.2" fill="none" stroke="#242424" stroke-width="1.1" stroke-linejoin="round"/><path d="M7.4 0.6 H14.2 V13.6 H0.6 V7 H7.4 Z" fill="#dcebf9" stroke="#1a6fce" stroke-width="1.2" stroke-linejoin="round"/><path d="M7.4 7 V13.6 M7.4 7 H14.2" fill="none" stroke="#1a6fce" stroke-width="1.1"/><circle cx="15.5" cy="15.4" r="5.3" fill="#e0303e"/><path d="M13.4 13.3 L17.6 17.5 M17.6 13.3 L13.4 17.5" stroke="#fff" stroke-width="1.1"/></svg><svg style="left:1197px;top:133px;" width="22" height="21" viewBox="0 0 22 21"><path d="M14.2 7 H20.5 M7.4 13.6 V19.8 H10" fill="none" stroke="#242424" stroke-width="1.1" stroke-linejoin="round"/><path d="M7.4 0.6 H14.2 V13.6 H0.6 V7 H7.4 Z" fill="#dcebf9" stroke="#1a6fce" stroke-width="1.2" stroke-linejoin="round"/><path d="M7.4 7 V13.6 M7.4 7 H14.2" fill="none" stroke="#1a6fce" stroke-width="1.1"/><path d="M10.4 19 L20.2 7.8" stroke="#2b9a3e" stroke-width="1.7" stroke-linecap="round"/><path d="M9.200000000000001 19.6 C9.200000000000001 17.4 10.6 16.4 12.200000000000001 17.4 C12.0 19.2 11.0 19.8 9.200000000000001 19.6 Z" fill="#2b9a3e"/></svg><span id="t42" style="position:absolute;top:163.94px;font-size:12px;line-height:12px;color:#242424;font-weight:400;white-space:nowrap;font-family:'Liberation Sans', sans-serif;left:1111.59px;">Insert</span><span id="t43" style="position:absolute;top:163.94px;font-size:12px;line-height:12px;color:#242424;font-weight:400;white-space:nowrap;font-family:'Liberation Sans', sans-serif;left:1149.26px;transform:scaleX(0.9809);transform-origin:center;">Delete</span><span id="t44" style="position:absolute;top:163.94px;font-size:12px;line-height:12px;color:#242424;font-weight:400;white-space:nowrap;font-family:'Liberation Sans', sans-serif;left:1188.59px;transform:scaleX(1.0033);transform-origin:center;">Format</span><svg style="left:1123.8000000000002px;top:183.5px;" width="7.2" height="5" viewBox="0 0 7.2 5"><path d="M1 1 L3.6 4 L6.2 1" fill="none" stroke="#242424" stroke-width="1.1" stroke-linecap="round" stroke-linejoin="round"/></svg><svg style="left:1163.8000000000002px;top:183.5px;" width="7.2" height="5" viewBox="0 0 7.2 5"><path d="M1 1 L3.6 4 L6.2 1" fill="none" stroke="#242424" stroke-width="1.1" stroke-linecap="round" stroke-linejoin="round"/></svg><svg style="left:1203.5px;top:183.5px;" width="7.2" height="5" viewBox="0 0 7.2 5"><path d="M1 1 L3.6 4 L6.2 1" fill="none" stroke="#242424" stroke-width="1.1" stroke-linecap="round" stroke-linejoin="round"/></svg><span id="t45" style="position:absolute;top:201.49px;font-size:11px;line-height:11px;color:#424242;font-weight:400;white-space:nowrap;font-family:'Liberation Sans', sans-serif;left:1154.77px;transform:scaleX(0.8529);transform-origin:center;">Cells</span><div style="position:absolute;left:1236px;top:123px;width:1px;height:92px;background:#c8c8c8"></div><svg style="left:1252.9px;top:130.5px;" width="12" height="13" viewBox="0 0 12 13"><path d="M11.5 2.5 V0.6 H0.8 L6 6.5 L0.8 12.4 H11.5 V10.5" fill="none" stroke="#242424" stroke-width="1.1"/></svg><span id="t46" style="position:absolute;top:132.14px;font-size:12px;line-height:12px;color:#242424;font-weight:400;white-space:nowrap;font-family:'Liberation Sans', sans-serif;left:1273.4px;transform:scaleX(0.9914);transform-origin:left;">AutoSum</span><svg style="left:1326.0px;top:135.0px;" width="7.2" height="5" viewBox="0 0 7.2 5"><path d="M1 1 L3.6 4 L6.2 1" fill="none" stroke="#242424" stroke-width="1.1" stroke-linecap="round" stroke-linejoin="round"/></svg><svg style="left:1252.9px;top:157px;" width="13" height="13" viewBox="0 0 13 13"><path d="M1 8 L7.5 1.5 A1.5 1.5 0 0 1 9.6 1.5 L11.5 3.4 A1.5 1.5 0 0 1 11.5 5.5 L5.5 11.5 H3 Z" fill="none" stroke="#242424" stroke-width="1.1"/><path d="M1 8 L4.5 11.5 H3 L0.8 9.3 Z M0.8 8.2 L4 5 L7.8 8.8 L5 11.6 H2.5 Z" fill="#a33db5"/><path d="M2.5 12 H7" stroke="#a33db5" stroke-width="1.1"/></svg><span id="t47" style="position:absolute;top:158.24px;font-size:12px;line-height:12px;color:#242424;font-weight:400;white-space:nowrap;font-family:'Liberation Sans', sans-serif;left:1273.4px;transform:scaleX(0.9624);transform-origin:left;">Clear</span><svg style="left:1304.0px;top:161.0px;" width="7.2" height="5" viewBox="0 0 7.2 5"><path d="M1 1 L3.6 4 L6.2 1" fill="none" stroke="#242424" stroke-width="1.1" stroke-linecap="round" stroke-linejoin="round"/></svg><svg style="left:1340px;top:125px;" width="32" height="30" viewBox="0 0 32 30"><path d="M10.3 16.6 L13.5 8.2 L16.6 16.6 M11.4 13.9 H15.6" fill="none" stroke="#1a7ad4" stroke-width="1.1"/><path d="M9.9 19.4 H16.6 L10.3 27.6 H17.3" fill="none" stroke="#242424" stroke-width="1.1"/><path d="M15.4 8.4 H29.7 V13.5 L22.5 20.4 V27.6 L19.4 26.5 V20.6 L17.3 17.3" fill="none" stroke="#242424" stroke-width="1.1" stroke-linejoin="round"/></svg><span id="t48" style="position:absolute;top:163.74px;font-size:12px;line-height:12px;color:#242424;font-weight:400;white-space:nowrap;font-family:'Liberation Sans', sans-serif;left:1343.52px;transform:scaleX(1.0363);transform-origin:center;">Sort &amp;</span><span id="t49" style="position:absolute;top:179.54px;font-size:12px;line-height:12px;color:#242424;font-weight:400;white-space:nowrap;font-family:'Liberation Sans', sans-serif;left:1342.8px;">Filter</span><svg style="left:1369.9px;top:183.7px;" width="7.2" height="5" viewBox="0 0 7.2 5"><path d="M1 1 L3.6 4 L6.2 1" fill="none" stroke="#242424" stroke-width="1.1" stroke-linecap="round" stroke-linejoin="round"/></svg><svg style="left:1393.8px;top:134px;" width="19" height="19" viewBox="0 0 19 19"><circle cx="7" cy="7" r="6.6" fill="none" stroke="#242424" stroke-width="1.1"/><path d="M11.9 11.6 L18 17.7" stroke="#242424" stroke-width="1.1"/></svg><span id="t50" style="position:absolute;top:163.74px;font-size:12px;line-height:12px;color:#242424;font-weight:400;white-space:nowrap;font-family:'Liberation Sans', sans-serif;left:1385.86px;transform:scaleX(1.0252);transform-origin:center;">Find &amp;</span><span id="t51" style="position:absolute;top:179.54px;font-size:12px;line-height:12px;color:#242424;font-weight:400;white-space:nowrap;font-family:'Liberation Sans', sans-serif;left:1382.8px;transform:scaleX(0.9533);transform-origin:left;">Select</span><svg style="left:1415.7px;top:183.7px;" width="7.2" height="5" viewBox="0 0 7.2 5"><path d="M1 1 L3.6 4 L6.2 1" fill="none" stroke="#242424" stroke-width="1.1" stroke-linecap="round" stroke-linejoin="round"/></svg><span id="t52" style="position:absolute;top:201.49px;font-size:11px;line-height:11px;color:#424242;font-weight:400;white-space:nowrap;font-family:'Liberation Sans', sans-serif;left:1318.68px;transform:scaleX(0.9248);transform-origin:center;">Editing</span><svg style="left:1455px;top:132px;" width="21" height="21" viewBox="0 0 21 21"><rect x="0.7" y="0.7" width="19.6" height="19.6" rx="3.5" fill="none" stroke="#e8704a" stroke-width="1.3"/><rect x="4" y="4" width="5.5" height="5.5" rx="0.8" fill="none" stroke="#e8704a" stroke-width="1.1"/><rect x="11.5" y="4" width="5.5" height="5.5" rx="0.8" fill="none" stroke="#e8704a" stroke-width="1.1"/><rect x="4" y="11.5" width="5.5" height="5.5" rx="0.8" fill="none" stroke="#e8704a" stroke-width="1.1"/><rect x="11.5" y="11.5" width="5.5" height="5.5" rx="0.8" fill="none" stroke="#e8704a" stroke-width="1.1"/></svg><span id="t53" style="position:absolute;top:163.74px;font-size:12px;line-height:12px;color:#242424;font-weight:400;white-space:nowrap;font-family:'Liberation Sans', sans-serif;left:1445.26px;transform:scaleX(1.0415);transform-origin:center;">Add-ins</span><svg style="left:1462.8000000000002px;top:184.0px;" width="7.2" height="5" viewBox="0 0 7.2 5"><path d="M1 1 L3.6 4 L6.2 1" fill="none" stroke="#242424" stroke-width="1.1" stroke-linecap="round" stroke-linejoin="round"/></svg><span id="t54" style="position:absolute;top:201.69px;font-size:11px;line-height:11px;color:#424242;font-weight:400;white-space:nowrap;font-family:'Liberation Sans', sans-serif;left:1446.85px;transform:scaleX(0.9281);transform-origin:center;">Add-ins</span><svg style="left:1874.0px;top:201.9px;" width="11.4" height="7" viewBox="0 0 11.4 7"><path d="M1 1 L5.7 6 L10.4 1" fill="none" stroke="#242424" stroke-width="1.2" stroke-linecap="round" stroke-linejoin="round"/></svg><div style="position:absolute;left:6px;top:223.5px;width:123.4px;height:23px;background:#fff;border:1px solid #d1d1d1;border-radius:4px;box-sizing:border-box"></div><span id="t55" style="position:absolute;top:228.60px;font-size:13px;line-height:13px;color:#242424;font-weight:400;white-space:nowrap;font-family:'Liberation Sans', sans-serif;left:11.4px;">B3</span><svg style="left:115.9px;top:233.5px;" width="11.2" height="7" viewBox="0 0 11.2 7"><path d="M1 1 L5.6 6 L10.2 1" fill="none" stroke="#242424" stroke-width="1.2" stroke-linecap="round" stroke-linejoin="round"/></svg><div style="position:absolute;left:138.3px;top:223.5px;width:67.3px;height:23px;background:#fff;border:1px solid #d1d1d1;border-radius:4px;box-sizing:border-box"></div><svg style="left:144px;top:229px;" width="13" height="13" viewBox="0 0 13 13"><path d="M0.6 0.6 L12 12 M12 0.6 L0.6 12" stroke="#a8a8a8" stroke-width="1.1"/></svg><svg style="left:164px;top:229px;" width="16" height="12" viewBox="0 0 16 12"><path d="M0.6 6.2 L5.5 11 L15.5 0.8" fill="none" stroke="#a8a8a8" stroke-width="1.1"/></svg><svg style="left:188px;top:227.5px;" width="13" height="15" viewBox="0 0 13 15"><path d="M7.5 1 C6 0.5 5.2 1.5 5 3 L4 11.5 C3.8 13 2.8 13.5 1.5 13" fill="none" stroke="#242424" stroke-width="1"/><path d="M3 5 H7.5" stroke="#242424" stroke-width="1"/><path d="M7 7.5 L12 13.5 M12 7.5 L7 13.5" stroke="#242424" stroke-width="1"/></svg><div style="position:absolute;left:214.6px;top:223.5px;width:1679px;height:23px;background:#fff;border:1px solid #d1d1d1;border-radius:4px;box-sizing:border-box"></div><span id="t56" style="position:absolute;top:228.00px;font-size:13px;line-height:13px;color:#242424;font-weight:400;white-space:nowrap;font-family:'Liberation Sans', sans-serif;left:223.5px;transform:scaleX(0.9249);transform-origin:left;">YOUR COMPANY NAME</span><svg style="left:1874.0px;top:231.8px;" width="11.4" height="7" viewBox="0 0 11.4 7"><path d="M1 1 L5.7 6 L10.4 1" fill="none" stroke="#242424" stroke-width="1.2" stroke-linecap="round" stroke-linejoin="round"/></svg><div style="position:absolute;left:41px;top:280px;width:1849.5px;height:673px;background:#fff"></div><div style="position:absolute;left:0px;top:280px;width:41px;height:673px;background:#f5f5f5"></div><div style="position:absolute;left:40px;top:262px;width:1px;height:691px;background:#d4d4d4"></div><div style="position:absolute;left:41px;top:262px;width:1849px;height:18.5px;background:#f5f5f5"></div><div style="position:absolute;left:0px;top:280px;width:1890px;height:1px;background:#d4d4d4"></div><svg style="left:25px;top:265px;" width="12" height="12" viewBox="0 0 12 12"><path d="M12 0 V12 H0 Z" fill="#c4c4c4"/></svg><div style="position:absolute;left:53px;top:262px;width:1139px;height:17px;background:#c9e8d5"></div><div style="position:absolute;left:53px;top:262px;width:1px;height:17px;background:#d6d6d6"></div><span id="t57" style="position:absolute;top:265.20px;font-size:13px;line-height:13px;color:#616161;font-weight:400;white-space:nowrap;font-family:'Liberation Sans', sans-serif;left:43.46px;">A</span><div style="position:absolute;left:264px;top:262px;width:1px;height:17px;background:#a9cfb6"></div><span id="t58" style="position:absolute;top:265.20px;font-size:13px;line-height:13px;color:#1f6b3b;font-weight:400;white-space:nowrap;font-family:'Liberation Sans', sans-serif;left:154.96px;">B</span><div style="position:absolute;left:285px;top:262px;width:1px;height:17px;background:#a9cfb6"></div><span id="t59" style="position:absolute;top:265.20px;font-size:13px;line-height:13px;color:#1f6b3b;font-weight:400;white-space:nowrap;font-family:'Liberation Sans', sans-serif;left:270.60px;">C</span><div style="position:absolute;left:496px;top:262px;width:1px;height:17px;background:#a9cfb6"></div><span id="t60" style="position:absolute;top:265.20px;font-size:13px;line-height:13px;color:#1f6b3b;font-weight:400;white-space:nowrap;font-family:'Liberation Sans', sans-serif;left:386.60px;">D</span><div style="position:absolute;left:518px;top:262px;width:1px;height:17px;background:#a9cfb6"></div><span id="t61" style="position:absolute;top:265.20px;font-size:13px;line-height:13px;color:#1f6b3b;font-weight:400;white-space:nowrap;font-family:'Liberation Sans', sans-serif;left:503.46px;">E</span><div style="position:absolute;left:728px;top:262px;width:1px;height:17px;background:#a9cfb6"></div><span id="t62" style="position:absolute;top:265.20px;font-size:13px;line-height:13px;color:#1f6b3b;font-weight:400;white-space:nowrap;font-family:'Liberation Sans', sans-serif;left:619.82px;">F</span><div style="position:absolute;left:749px;top:262px;width:1px;height:17px;background:#a9cfb6"></div><span id="t63" style="position:absolute;top:265.20px;font-size:13px;line-height:13px;color:#1f6b3b;font-weight:400;white-space:nowrap;font-family:'Liberation Sans', sans-serif;left:734.24px;">G</span><div style="position:absolute;left:960px;top:262px;width:1px;height:17px;background:#a9cfb6"></div><span id="t64" style="position:absolute;top:265.20px;font-size:13px;line-height:13px;color:#1f6b3b;font-weight:400;white-space:nowrap;font-family:'Liberation Sans', sans-serif;left:850.60px;">H</span><div style="position:absolute;left:982px;top:262px;width:1px;height:17px;background:#a9cfb6"></div><span id="t65" style="position:absolute;top:265.20px;font-size:13px;line-height:13px;color:#1f6b3b;font-weight:400;white-space:nowrap;font-family:'Liberation Sans', sans-serif;left:969.99px;">I</span><div style="position:absolute;left:1080px;top:262px;width:1px;height:17px;background:#a9cfb6"></div><span id="t66" style="position:absolute;top:265.20px;font-size:13px;line-height:13px;color:#1f6b3b;font-weight:400;white-space:nowrap;font-family:'Liberation Sans', sans-serif;left:1028.55px;">J</span><div style="position:absolute;left:1094px;top:262px;width:1px;height:17px;background:#a9cfb6"></div><span id="t67" style="position:absolute;top:265.20px;font-size:13px;line-height:13px;color:#1f6b3b;font-weight:400;white-space:nowrap;font-family:'Liberation Sans', sans-serif;left:1083.46px;">K</span><div style="position:absolute;left:1192px;top:262px;width:1px;height:17px;background:#a9cfb6"></div><span id="t68" style="position:absolute;top:265.20px;font-size:13px;line-height:13px;color:#1f6b3b;font-weight:400;white-space:nowrap;font-family:'Liberation Sans', sans-serif;left:1140.18px;">L</span><div style="position:absolute;left:1205px;top:262px;width:1px;height:17px;background:#d6d6d6"></div><span id="t69" style="position:absolute;top:265.20px;font-size:13px;line-height:13px;color:#616161;font-weight:400;white-space:nowrap;font-family:'Liberation Sans', sans-serif;left:1193.88px;">M</span><div style="position:absolute;left:1346px;top:262px;width:1px;height:17px;background:#d6d6d6"></div><span id="t70" style="position:absolute;top:265.20px;font-size:13px;line-height:13px;color:#616161;font-weight:400;white-space:nowrap;font-family:'Liberation Sans', sans-serif;left:1271.60px;">N</span><div style="position:absolute;left:1426px;top:262px;width:1px;height:17px;background:#d6d6d6"></div><span id="t71" style="position:absolute;top:265.20px;font-size:13px;line-height:13px;color:#616161;font-weight:400;white-space:nowrap;font-family:'Liberation Sans', sans-serif;left:1381.74px;">O</span><div style="position:absolute;left:1506px;top:262px;width:1px;height:17px;background:#d6d6d6"></div><span id="t72" style="position:absolute;top:265.20px;font-size:13px;line-height:13px;color:#616161;font-weight:400;white-space:nowrap;font-family:'Liberation Sans', sans-serif;left:1462.46px;">P</span><div style="position:absolute;left:1586px;top:262px;width:1px;height:17px;background:#d6d6d6"></div><span id="t73" style="position:absolute;top:265.20px;font-size:13px;line-height:13px;color:#616161;font-weight:400;white-space:nowrap;font-family:'Liberation Sans', sans-serif;left:1541.74px;">Q</span><div style="position:absolute;left:1666px;top:262px;width:1px;height:17px;background:#d6d6d6"></div><span id="t74" style="position:absolute;top:265.20px;font-size:13px;line-height:13px;color:#616161;font-weight:400;white-space:nowrap;font-family:'Liberation Sans', sans-serif;left:1622.10px;">R</span><div style="position:absolute;left:1738px;top:262px;width:1px;height:17px;background:#d6d6d6"></div><span id="t75" style="position:absolute;top:265.20px;font-size:13px;line-height:13px;color:#616161;font-weight:400;white-space:nowrap;font-family:'Liberation Sans', sans-serif;left:1698.46px;">S</span><div style="position:absolute;left:1810px;top:262px;width:1px;height:17px;background:#d6d6d6"></div><span id="t76" style="position:absolute;top:265.20px;font-size:13px;line-height:13px;color:#616161;font-weight:400;white-space:nowrap;font-family:'Liberation Sans', sans-serif;left:1770.82px;">T</span><div style="position:absolute;left:1882px;top:262px;width:1px;height:17px;background:#d6d6d6"></div><span id="t77" style="position:absolute;top:265.20px;font-size:13px;line-height:13px;color:#616161;font-weight:400;white-space:nowrap;font-family:'Liberation Sans', sans-serif;left:1842.10px;">U</span><div style="position:absolute;left:53px;top:279px;width:1139px;height:2px;background:#107c41"></div><div style="position:absolute;left:0;top:0;width:40px;height:953px;overflow:hidden"><div style="position:absolute;left:0px;top:290.7px;width:40px;height:1px;background:#dcdcdc"></div><span id="t78" style="position:absolute;top:280.20px;font-size:13px;line-height:13px;color:#616161;font-weight:400;white-space:nowrap;font-family:'Liberation Sans', sans-serif;left:28.17px;">1</span><div style="position:absolute;left:0px;top:340.9px;width:40px;height:1px;background:#dcdcdc"></div><span id="t79" style="position:absolute;top:310.90px;font-size:13px;line-height:13px;color:#616161;font-weight:400;white-space:nowrap;font-family:'Liberation Sans', sans-serif;left:28.17px;">2</span><div style="position:absolute;left:0px;top:341.4px;width:40px;height:86.0px;background:#c9e8d5"></div><div style="position:absolute;left:0px;top:426.9px;width:40px;height:1px;#b5d6c1"></div><span id="t80" style="position:absolute;top:379.00px;font-size:13px;line-height:13px;color:#1f6b3b;font-weight:400;white-space:nowrap;font-family:'Liberation Sans', sans-serif;left:28.17px;">3</span><div style="position:absolute;left:0px;top:427.4px;width:40px;height:9.600000000000023px;background:#c9e8d5"></div><div style="position:absolute;left:0px;top:436.5px;width:40px;height:1px;#b5d6c1"></div><div style="position:absolute;left:0;top:428px;width:40px;height:9px;overflow:hidden"><span id="t81" style="position:absolute;top:-0.40px;font-size:13px;line-height:13px;color:#1f6b3b;font-weight:400;white-space:nowrap;font-family:'Liberation Sans', sans-serif;left:28.17px;">4</span></div><div style="position:absolute;left:0px;top:468.5px;width:40px;height:1px;background:#dcdcdc"></div><span id="t82" style="position:absolute;top:447.60px;font-size:13px;line-height:13px;color:#616161;font-weight:400;white-space:nowrap;font-family:'Liberation Sans', sans-serif;left:28.17px;">5</span><div style="position:absolute;left:0px;top:493.0px;width:40px;height:1px;background:#dcdcdc"></div><span id="t83" style="position:absolute;top:475.85px;font-size:13px;line-height:13px;color:#616161;font-weight:400;white-space:nowrap;font-family:'Liberation Sans', sans-serif;left:28.17px;">6</span><div style="position:absolute;left:0px;top:523.0px;width:40px;height:1px;background:#dcdcdc"></div><span id="t84" style="position:absolute;top:503.10px;font-size:13px;line-height:13px;color:#616161;font-weight:400;white-space:nowrap;font-family:'Liberation Sans', sans-serif;left:28.17px;">7</span><div style="position:absolute;left:0px;top:578.5px;width:40px;height:1px;background:#dcdcdc"></div><span id="t85" style="position:absolute;top:545.85px;font-size:13px;line-height:13px;color:#616161;font-weight:400;white-space:nowrap;font-family:'Liberation Sans', sans-serif;left:28.17px;">8</span><div style="position:absolute;left:0px;top:604.0px;width:40px;height:1px;background:#dcdcdc"></div><span id="t86" style="position:absolute;top:586.35px;font-size:13px;line-height:13px;color:#616161;font-weight:400;white-space:nowrap;font-family:'Liberation Sans', sans-serif;left:28.17px;">9</span><div style="position:absolute;left:0px;top:629.5px;width:40px;height:1px;background:#dcdcdc"></div><span id="t87" style="position:absolute;top:611.85px;font-size:13px;line-height:13px;color:#616161;font-weight:400;white-space:nowrap;font-family:'Liberation Sans', sans-serif;left:20.93px;">10</span><div style="position:absolute;left:0px;top:654.5px;width:40px;height:1px;background:#dcdcdc"></div><span id="t88" style="position:absolute;top:637.10px;font-size:13px;line-height:13px;color:#616161;font-weight:400;white-space:nowrap;font-family:'Liberation Sans', sans-serif;left:21.90px;">11</span><div style="position:absolute;left:0px;top:679.5px;width:40px;height:1px;background:#dcdcdc"></div><span id="t89" style="position:absolute;top:662.10px;font-size:13px;line-height:13px;color:#616161;font-weight:400;white-space:nowrap;font-family:'Liberation Sans', sans-serif;left:20.93px;">12</span><div style="position:absolute;left:0px;top:711.5px;width:40px;height:1px;background:#dcdcdc"></div><span id="t90" style="position:absolute;top:690.60px;font-size:13px;line-height:13px;color:#616161;font-weight:400;white-space:nowrap;font-family:'Liberation Sans', sans-serif;left:20.93px;">13</span><div style="position:absolute;left:0px;top:736.0px;width:40px;height:1px;background:#dcdcdc"></div><span id="t91" style="position:absolute;top:718.85px;font-size:13px;line-height:13px;color:#616161;font-weight:400;white-space:nowrap;font-family:'Liberation Sans', sans-serif;left:20.93px;">14</span><div style="position:absolute;left:0px;top:761.0px;width:40px;height:1px;background:#dcdcdc"></div><span id="t92" style="position:absolute;top:743.60px;font-size:13px;line-height:13px;color:#616161;font-weight:400;white-space:nowrap;font-family:'Liberation Sans', sans-serif;left:20.93px;">15</span><div style="position:absolute;left:0px;top:801.0px;width:40px;height:1px;background:#dcdcdc"></div><span id="t93" style="position:absolute;top:776.10px;font-size:13px;line-height:13px;color:#616161;font-weight:400;white-space:nowrap;font-family:'Liberation Sans', sans-serif;left:20.93px;">16</span><div style="position:absolute;left:0px;top:841.0px;width:40px;height:1px;background:#dcdcdc"></div><span id="t94" style="position:absolute;top:816.10px;font-size:13px;line-height:13px;color:#616161;font-weight:400;white-space:nowrap;font-family:'Liberation Sans', sans-serif;left:20.93px;">17</span><div style="position:absolute;left:0px;top:881.0px;width:40px;height:1px;background:#dcdcdc"></div><span id="t95" style="position:absolute;top:856.10px;font-size:13px;line-height:13px;color:#616161;font-weight:400;white-space:nowrap;font-family:'Liberation Sans', sans-serif;left:20.93px;">18</span><div style="position:absolute;left:0px;top:921.0px;width:40px;height:1px;background:#dcdcdc"></div><span id="t96" style="position:absolute;top:896.10px;font-size:13px;line-height:13px;color:#616161;font-weight:400;white-space:nowrap;font-family:'Liberation Sans', sans-serif;left:20.93px;">19</span><div style="position:absolute;left:0px;top:961.0px;width:40px;height:1px;background:#dcdcdc"></div><span id="t97" style="position:absolute;top:934.60px;font-size:13px;line-height:13px;color:#616161;font-weight:400;white-space:nowrap;font-family:'Liberation Sans', sans-serif;left:20.93px;">20</span></div><div style="position:absolute;left:39px;top:341.5px;width:2px;height:96.5px;background:#107c41"></div><span id="t98" style="position:absolute;top:308.16px;font-size:31px;line-height:31px;color:#245e36;font-weight:400;white-space:nowrap;font-family:'Liberation Sans', sans-serif;left:58px;transform:scaleX(0.9176);transform-origin:left;">ANNUAL FINANCIAL REPORT</span><div style="position:absolute;left:1079px;top:291px;width:113px;height:2px;background:#404040"></div><span id="t99" style="position:absolute;top:304.89px;font-size:26px;line-height:26px;color:#404040;font-weight:400;white-space:nowrap;font-family:'Liberation Sans', sans-serif;left:1108.2px;transform:scaleX(0.9889);transform-origin:left;">2018</span><span id="t100" style="position:absolute;top:345.68px;font-size:24px;line-height:24px;color:#595959;font-weight:400;white-space:nowrap;font-family:'Liberation Sans', sans-serif;left:57px;">YOUR COMPANY NAME</span><div style="position:absolute;left:52px;top:341px;width:1141px;height:97px;border:2px solid #107c41;box-sizing:border-box"></div><div style="position:absolute;left:1188.5px;top:434px;width:5.5px;height:5.5px;background:#107c41;border:1px solid #fff;box-sizing:border-box"></div><span id="t101" style="position:absolute;top:444.36px;font-size:18px;line-height:18px;color:#404040;font-weight:400;white-space:nowrap;font-family:'Liberation Sans', sans-serif;left:58px;transform:scaleX(0.8776);transform-origin:left;">KEY METRICS</span><span id="t102" style="position:absolute;top:443.60px;font-size:15px;line-height:15px;color:#2c5e3a;font-weight:400;white-space:nowrap;font-family:'Liberation Sans', sans-serif;font-style:italic;left:290.3px;transform:scaleX(0.9742);transform-origin:left;">Tap to change report Key Metrics</span><div style="position:absolute;left:53px;top:468px;width:1139px;height:2px;background:#404040"></div><div style="position:absolute;left:622.8px;top:442.6px;width:165.7px;height:16px;background:#fff;border:1px solid #8a8a8a;box-sizing:border-box"></div><span id="t103" style="position:absolute;top:445.69px;font-size:11px;line-height:11px;color:#333;font-weight:400;white-space:nowrap;font-family:'Liberation Sans', sans-serif;left:626px;transform:scaleX(0.9886);transform-origin:left;">Enter Company Name in this cell</span><div style="position:absolute;left:53px;top:493px;width:213px;height:162.5px;border:2px solid #505050;box-sizing:border-box;background:#fff"></div><div style="position:absolute;left:53px;top:493px;width:213px;height:31px;background:#245e36;border:1px solid #1c5129;box-sizing:border-box"></div><span id="t104" style="position:absolute;top:499.63px;font-size:16.5px;line-height:16.5px;color:#fff;font-weight:700;white-space:nowrap;font-family:'Liberation Sans', sans-serif;left:114.11px;transform:scaleX(0.8993);transform-origin:center;">REVENUES</span><span id="t105" style="position:absolute;top:538.14px;font-size:27px;line-height:27px;color:#4a4a4a;font-weight:400;white-space:nowrap;font-family:'Liberation Sans', sans-serif;left:99.39px;transform:scaleX(0.9879);transform-origin:center;">$125,000</span><div style="position:absolute;left:55px;top:578.5px;width:209px;height:1px;background-image:linear-gradient(90deg,#555 0 4px,transparent 4px 7px);background-size:7px 1px"></div><div style="position:absolute;left:240.2px;top:607.8px;width:3px;height:3px;background:#1f5e33;border-radius:50%"></div><div style="position:absolute;left:285px;top:493px;width:213px;height:162.5px;border:2px solid #505050;box-sizing:border-box;background:#fff"></div><div style="position:absolute;left:285px;top:493px;width:213px;height:31px;background:#245e36;border:1px solid #1c5129;box-sizing:border-box"></div><span id="t106" style="position:absolute;top:499.63px;font-size:16.5px;line-height:16.5px;color:#fff;font-weight:700;white-space:nowrap;font-family:'Liberation Sans', sans-serif;left:342.45px;transform:scaleX(0.9078);transform-origin:center;">NET PROFIT</span><span id="t107" style="position:absolute;top:538.14px;font-size:27px;line-height:27px;color:#4a4a4a;font-weight:400;white-space:nowrap;font-family:'Liberation Sans', sans-serif;left:338.90px;transform:scaleX(0.9977);transform-origin:center;">$54,000</span><div style="position:absolute;left:287px;top:578.5px;width:209px;height:1px;background-image:linear-gradient(90deg,#555 0 4px,transparent 4px 7px);background-size:7px 1px"></div><div style="position:absolute;left:472.4px;top:607.8px;width:3px;height:3px;background:#1f5e33;border-radius:50%"></div><div style="position:absolute;left:517px;top:493px;width:213px;height:162.5px;border:2px solid #505050;box-sizing:border-box;background:#fff"></div><div style="position:absolute;left:517px;top:493px;width:213px;height:31px;background:#245e36;border:1px solid #1c5129;box-sizing:border-box"></div><span id="t108" style="position:absolute;top:499.63px;font-size:16.5px;line-height:16.5px;color:#fff;font-weight:700;white-space:nowrap;font-family:'Liberation Sans', sans-serif;left:582.70px;transform:scaleX(0.8951);transform-origin:center;">INTEREST</span><span id="t109" style="position:absolute;top:538.14px;font-size:27px;line-height:27px;color:#4a4a4a;font-weight:400;white-space:nowrap;font-family:'Liberation Sans', sans-serif;left:578.50px;transform:scaleX(1.0037);transform-origin:center;">$2,500</span><div style="position:absolute;left:519px;top:578.5px;width:209px;height:1px;background-image:linear-gradient(90deg,#555 0 4px,transparent 4px 7px);background-size:7px 1px"></div><div style="position:absolute;left:704.5px;top:607.8px;width:3px;height:3px;background:#1f5e33;border-radius:50%"></div><div style="position:absolute;left:749px;top:493px;width:213px;height:162.5px;border:2px solid #505050;box-sizing:border-box;background:#fff"></div><div style="position:absolute;left:749px;top:493px;width:213px;height:31px;background:#245e36;border:1px solid #1c5129;box-sizing:border-box"></div><span id="t110" style="position:absolute;top:499.63px;font-size:16.5px;line-height:16.5px;color:#fff;font-weight:700;white-space:nowrap;font-family:'Liberation Sans', sans-serif;left:793.77px;transform:scaleX(0.8929);transform-origin:center;">DEPRECIATION</span><span id="t111" style="position:absolute;top:538.14px;font-size:27px;line-height:27px;color:#4a4a4a;font-weight:400;white-space:nowrap;font-family:'Liberation Sans', sans-serif;left:810.40px;">$4,500</span><div style="position:absolute;left:751px;top:578.5px;width:209px;height:1px;background-image:linear-gradient(90deg,#555 0 4px,transparent 4px 7px);background-size:7px 1px"></div><div style="position:absolute;left:936.4px;top:607.8px;width:3px;height:3px;background:#1f5e33;border-radius:50%"></div><div style="position:absolute;left:981px;top:493px;width:212px;height:162.5px;border:2px solid #505050;box-sizing:border-box;background:#fff"></div><div style="position:absolute;left:981px;top:493px;width:212px;height:31px;background:#245e36;border:1px solid #1c5129;box-sizing:border-box"></div><span id="t112" style="position:absolute;top:499.63px;font-size:16.5px;line-height:16.5px;color:#fff;font-weight:700;white-space:nowrap;font-family:'Liberation Sans', sans-serif;left:1006.02px;transform:scaleX(0.8924);transform-origin:center;">OPERATING PROFIT</span><span id="t113" style="position:absolute;top:538.14px;font-size:27px;line-height:27px;color:#4a4a4a;font-weight:400;white-space:nowrap;font-family:'Liberation Sans', sans-serif;left:1034.40px;">$60,000</span><div style="position:absolute;left:983px;top:578.5px;width:208px;height:1px;background-image:linear-gradient(90deg,#555 0 4px,transparent 4px 7px);background-size:7px 1px"></div><div style="position:absolute;left:1167.5px;top:607.8px;width:3px;height:3px;background:#1f5e33;border-radius:50%"></div><div style="position:absolute;left:53px;top:679px;width:1139px;height:2px;background:#404040"></div><span id="t114" style="position:absolute;top:687.46px;font-size:18px;line-height:18px;color:#404040;font-weight:400;white-space:nowrap;font-family:'Liberation Sans', sans-serif;left:58px;transform:scaleX(0.8957);transform-origin:left;">ALL METRICS</span><span id="t115" style="position:absolute;top:687.00px;font-size:15px;line-height:15px;color:#2c5e3a;font-weight:400;white-space:nowrap;font-family:'Liberation Sans', sans-serif;font-style:italic;left:288.6px;transform:scaleX(0.9791);transform-origin:left;">Do not modify the information below. Tap to enter Financial Data</span><div style="position:absolute;left:53px;top:711px;width:1139px;height:2px;background:#404040"></div><div style="position:absolute;left:53px;top:737px;width:1139px;height:24.5px;background:#245e36"></div><span id="t116" style="position:absolute;top:739.66px;font-size:16px;line-height:16px;color:#fff;font-weight:700;white-space:nowrap;font-family:'Liberation Sans', sans-serif;left:65.2px;transform:scaleX(0.9218);transform-origin:left;">METRIC</span><span id="t117" style="position:absolute;top:739.66px;font-size:16px;line-height:16px;color:#fff;font-weight:700;white-space:nowrap;font-family:'Liberation Sans', sans-serif;left:328.12px;transform:scaleX(0.9195);transform-origin:right;">REPORT YEAR (2018)</span><span id="t118" style="position:absolute;top:739.66px;font-size:16px;line-height:16px;color:#fff;font-weight:700;white-space:nowrap;font-family:'Liberation Sans', sans-serif;left:546.80px;transform:scaleX(0.9177);transform-origin:right;">PREVIOUS YEAR (2017)</span><span id="t119" style="position:absolute;top:739.66px;font-size:16px;line-height:16px;color:#fff;font-weight:700;white-space:nowrap;font-family:'Liberation Sans', sans-serif;left:807.18px;transform:scaleX(0.9126);transform-origin:right;">% CHANGE</span><span id="t120" style="position:absolute;top:739.66px;font-size:16px;line-height:16px;color:#fff;font-weight:700;white-space:nowrap;font-family:'Liberation Sans', sans-serif;left:963.7px;transform:scaleX(0.9142);transform-origin:left;">1 YEAR TREND</span><div style="position:absolute;left:53px;top:761.5px;width:1139px;height:40px;background:#f2f2f2"></div><div style="position:absolute;left:53px;top:801.0px;width:1139px;height:1px;background:#d9d9d9"></div><span id="t121" style="position:absolute;top:775.10px;font-size:15px;line-height:15px;color:#404040;font-weight:400;white-space:nowrap;font-family:'Liberation Sans', sans-serif;left:65.2px;transform:scaleX(0.8125);transform-origin:left;">REVENUES</span><span id="t122" style="position:absolute;top:775.10px;font-size:15px;line-height:15px;color:#404040;font-weight:400;white-space:nowrap;font-family:'Liberation Sans', sans-serif;left:410.68px;transform:scaleX(0.9712);transform-origin:right;">$125,000.00</span><span id="t123" style="position:absolute;top:775.10px;font-size:15px;line-height:15px;color:#404040;font-weight:400;white-space:nowrap;font-family:'Liberation Sans', sans-serif;left:695.84px;transform:scaleX(1.0523);transform-origin:right;">#N/A</span><svg style="left:497px;top:761.5px;" width="9" height="8" viewBox="0 0 9 8"><path d="M0 0 H8.5 L0 8 Z" fill="#107c41"/></svg><div style="position:absolute;left:1165.5px;top:765.0px;width:3px;height:3px;background:#1f5e33;border-radius:50%"></div><div style="position:absolute;left:53px;top:841.0px;width:1139px;height:1px;background:#d9d9d9"></div><span id="t124" style="position:absolute;top:815.10px;font-size:15px;line-height:15px;color:#404040;font-weight:400;white-space:nowrap;font-family:'Liberation Sans', sans-serif;left:65.2px;transform:scaleX(0.8224);transform-origin:left;">OPERATING EXPENSES</span><span id="t125" style="position:absolute;top:815.10px;font-size:15px;line-height:15px;color:#404040;font-weight:400;white-space:nowrap;font-family:'Liberation Sans', sans-serif;left:419.02px;transform:scaleX(0.9686);transform-origin:right;">$65,000.00</span><span id="t126" style="position:absolute;top:815.10px;font-size:15px;line-height:15px;color:#404040;font-weight:400;white-space:nowrap;font-family:'Liberation Sans', sans-serif;left:695.84px;transform:scaleX(1.0523);transform-origin:right;">#N/A</span><svg style="left:497px;top:801.5px;" width="9" height="8" viewBox="0 0 9 8"><path d="M0 0 H8.5 L0 8 Z" fill="#107c41"/></svg><div style="position:absolute;left:1165.5px;top:805.0px;width:3px;height:3px;background:#1f5e33;border-radius:50%"></div><div style="position:absolute;left:53px;top:841.5px;width:1139px;height:40px;background:#f2f2f2"></div><div style="position:absolute;left:53px;top:881.0px;width:1139px;height:1px;background:#d9d9d9"></div><span id="t127" style="position:absolute;top:855.10px;font-size:15px;line-height:15px;color:#404040;font-weight:400;white-space:nowrap;font-family:'Liberation Sans', sans-serif;left:65.2px;transform:scaleX(0.8517);transform-origin:left;">OPERATING PROFIT</span><span id="t128" style="position:absolute;top:855.10px;font-size:15px;line-height:15px;color:#404040;font-weight:400;white-space:nowrap;font-family:'Liberation Sans', sans-serif;left:419.02px;transform:scaleX(0.9686);transform-origin:right;">$60,000.00</span><span id="t129" style="position:absolute;top:855.10px;font-size:15px;line-height:15px;color:#404040;font-weight:400;white-space:nowrap;font-family:'Liberation Sans', sans-serif;left:695.84px;transform:scaleX(1.0523);transform-origin:right;">#N/A</span><svg style="left:497px;top:841.5px;" width="9" height="8" viewBox="0 0 9 8"><path d="M0 0 H8.5 L0 8 Z" fill="#107c41"/></svg><div style="position:absolute;left:1165.5px;top:845.0px;width:3px;height:3px;background:#1f5e33;border-radius:50%"></div><div style="position:absolute;left:53px;top:921.0px;width:1139px;height:1px;background:#d9d9d9"></div><span id="t130" style="position:absolute;top:895.10px;font-size:15px;line-height:15px;color:#404040;font-weight:400;white-space:nowrap;font-family:'Liberation Sans', sans-serif;left:65.2px;transform:scaleX(0.8409);transform-origin:left;">DEPRECIATION</span><span id="t131" style="position:absolute;top:895.10px;font-size:15px;line-height:15px;color:#404040;font-weight:400;white-space:nowrap;font-family:'Liberation Sans', sans-serif;left:427.37px;transform:scaleX(0.9774);transform-origin:right;">$4,500.00</span><span id="t132" style="position:absolute;top:895.10px;font-size:15px;line-height:15px;color:#404040;font-weight:400;white-space:nowrap;font-family:'Liberation Sans', sans-serif;left:695.84px;transform:scaleX(1.0523);transform-origin:right;">#N/A</span><svg style="left:497px;top:881.5px;" width="9" height="8" viewBox="0 0 9 8"><path d="M0 0 H8.5 L0 8 Z" fill="#107c41"/></svg><div style="position:absolute;left:1165.5px;top:885.0px;width:3px;height:3px;background:#1f5e33;border-radius:50%"></div><div style="position:absolute;left:53px;top:921.5px;width:1139px;height:40px;background:#f2f2f2"></div><div style="position:absolute;left:53px;top:961.0px;width:1139px;height:1px;background:#d9d9d9"></div><span id="t133" style="position:absolute;top:935.10px;font-size:15px;line-height:15px;color:#404040;font-weight:400;white-space:nowrap;font-family:'Liberation Sans', sans-serif;left:65.2px;transform:scaleX(0.8381);transform-origin:left;">INTEREST</span><span id="t134" style="position:absolute;top:935.10px;font-size:15px;line-height:15px;color:#404040;font-weight:400;white-space:nowrap;font-family:'Liberation Sans', sans-serif;left:427.37px;transform:scaleX(0.9774);transform-origin:right;">$2,500.00</span><span id="t135" style="position:absolute;top:935.10px;font-size:15px;line-height:15px;color:#404040;font-weight:400;white-space:nowrap;font-family:'Liberation Sans', sans-serif;left:695.84px;transform:scaleX(1.0523);transform-origin:right;">#N/A</span><svg style="left:497px;top:921.5px;" width="9" height="8" viewBox="0 0 9 8"><path d="M0 0 H8.5 L0 8 Z" fill="#107c41"/></svg><div style="position:absolute;left:1165.5px;top:925.0px;width:3px;height:3px;background:#1f5e33;border-radius:50%"></div><div style="position:absolute;left:1890px;top:280.5px;width:11px;height:672.5px;background:#e8e8e8"></div><svg style="left:1891.5px;top:286.5px;" width="8" height="6" viewBox="0 0 8 6"><path d="M4 0 L8 5.5 H0 Z" fill="#8a8a8a"/></svg><div style="position:absolute;left:1893px;top:301px;width:5.6px;height:276px;background:#8a8a8a;border-radius:3px"></div><svg style="left:1891.5px;top:942px;" width="8" height="6" viewBox="0 0 8 6"><path d="M4 5.5 L8 0 H0 Z" fill="#8a8a8a"/></svg><div style="position:absolute;left:41px;top:953px;width:1849px;height:11.6px;background:#e6e6e6"></div><div style="position:absolute;left:1890px;top:953px;width:11px;height:11.6px;background:#e6e6e6"></div><svg style="left:46.5px;top:955.5px;" width="6.5" height="7" viewBox="0 0 6.5 7"><path d="M0 3.5 L6 0 V7 Z" fill="#8a8a8a"/></svg><div style="position:absolute;left:60.6px;top:956px;width:1342px;height:5.8px;background:#8a8a8a;border-radius:3px"></div><svg style="left:1879px;top:955.5px;" width="6.5" height="7" viewBox="0 0 6.5 7"><path d="M6 3.5 L0 0 V7 Z" fill="#8a8a8a"/></svg><svg style="left:10.5px;top:975.5px;" width="7" height="11" viewBox="0 0 7 11"><path d="M6 0.5 L1 5.5 L6 10.5" fill="none" stroke="#b8b8b8" stroke-width="1.1"/></svg><svg style="left:43.5px;top:975.5px;" width="7" height="11" viewBox="0 0 7 11"><path d="M1 0.5 L6 5.5 L1 10.5" fill="none" stroke="#b8b8b8" stroke-width="1.1"/></svg><svg style="left:72px;top:975.5px;" width="12" height="11" viewBox="0 0 12 11"><path d="M0 1.5 H12 M0 5.5 H12 M0 9.5 H12" stroke="#242424" stroke-width="1"/></svg><div style="position:absolute;left:97.2px;top:967px;width:110.5px;height:23.7px;background:#a9dbb7;border-radius:3px"></div><span id="t136" style="position:absolute;top:973.45px;font-size:14px;line-height:14px;color:#333333;font-weight:700;white-space:nowrap;font-family:'Liberation Sans', sans-serif;left:103.5px;transform:scaleX(0.9015);transform-origin:left;">Financial Report</span><div style="position:absolute;left:103px;top:994.2px;width:99px;height:2.6px;background:#107c41"></div><div style="position:absolute;left:214px;top:967.2px;width:134px;height:25.6px;background:#98d4a7;border-radius:3px"></div><span id="t137" style="position:absolute;top:973.45px;font-size:14px;line-height:14px;color:#404040;font-weight:400;white-space:nowrap;font-family:'Liberation Sans', sans-serif;left:220.6px;transform:scaleX(0.9826);transform-origin:left;">Financial Data Input</span><div style="position:absolute;left:354.2px;top:967.2px;width:130.6px;height:25.6px;background:#225c35;border-radius:3px"></div><span id="t138" style="position:absolute;top:973.25px;font-size:14px;line-height:14px;color:#fff;font-weight:400;white-space:nowrap;font-family:'Liberation Sans', sans-serif;left:360.6px;transform:scaleX(0.9897);transform-origin:left;">Key Metric Settings</span><svg style="left:498px;top:975px;" width="11" height="11" viewBox="0 0 11 11"><path d="M5.5 0 V11 M0 5.5 H11" stroke="#242424" stroke-width="1"/></svg><div style="position:absolute;left:0px;top:997.3px;width:1901px;height:1px;background:#e0e0e0"></div><div style="position:absolute;left:0px;top:998.3px;width:1901px;height:19px;background:#fff"></div><span id="t139" style="position:absolute;top:1004.54px;font-size:12px;line-height:12px;color:#616161;font-weight:400;white-space:nowrap;font-family:'Liberation Sans', sans-serif;left:18.3px;transform:scaleX(0.9922);transform-origin:left;">Workbook Statistics</span><svg style="left:1662.0px;top:1004.9000000000001px;" width="10.6" height="6.6" viewBox="0 0 10.6 6.6"><path d="M1 1 L5.3 5.6 L9.6 1" fill="none" stroke="#424242" stroke-width="1.1" stroke-linecap="round" stroke-linejoin="round"/></svg><svg style="left:1687px;top:1005px;" width="14" height="10" viewBox="0 0 14 10"><rect x="0.6" y="0.6" width="12.8" height="8.8" rx="1.2" fill="none" stroke="#424242" stroke-width="1.1"/><path d="M3 3 H4 M5.5 3 H6.5 M8 3 H9 M10.5 3 H11 M3 7 H11" stroke="#424242" stroke-width="1"/></svg><svg style="left:1720px;top:1003px;" width="12" height="12" viewBox="0 0 12 12"><circle cx="6" cy="6" r="5.4" fill="none" stroke="#424242" stroke-width="1.1"/><path d="M4.3 4.5 A1.8 1.8 0 1 1 6.5 6.3 C6 6.6 6 7 6 7.6" fill="none" stroke="#424242" stroke-width="1"/><circle cx="6" cy="9.3" r="0.7" fill="#424242"/></svg><svg style="left:1751px;top:1003px;" width="14" height="13" viewBox="0 0 14 13"><rect x="2.2" y="4.3" width="3.2" height="3.2" rx="0.6" fill="none" stroke="#424242" stroke-width="1"/><path d="M0.5 9 H7.2 A3.35 3.35 0 0 1 0.5 9 Z" fill="none" stroke="#424242" stroke-width="1"/><path d="M7.5 0.6 H12.8 A0.6 0.6 0 0 1 13.4 1.2 V3.8 A0.6 0.6 0 0 1 12.8 4.4 H9.8 L8.2 5.8 V4.4 H7.5 Z" fill="none" stroke="#424242" stroke-width="1"/></svg><div style="position:absolute;left:1784px;top:1008.5px;width:11px;height:1.2px;background:#424242"></div><div style="position:absolute;left:1806.5px;top:1000.3px;width:51.2px;height:20px;background:#fff;border:1px solid #c8c8c8;border-radius:4px;box-sizing:border-box"></div><span id="t140" style="position:absolute;top:1003.84px;font-size:12px;line-height:12px;color:#242424;font-weight:400;white-space:nowrap;font-family:'Liberation Sans', sans-serif;left:1811.7px;transform:scaleX(0.9443);transform-origin:left;">100%</span><svg style="left:1844.3px;top:1005.4px;" width="10" height="6.4" viewBox="0 0 10 6.4"><path d="M1 1 L5.0 5.4 L9 1" fill="none" stroke="#242424" stroke-width="1.2" stroke-linecap="round" stroke-linejoin="round"/></svg><svg style="left:1868px;top:1003.5px;" width="11" height="11" viewBox="0 0 11 11"><path d="M5.5 0 V11 M0 5.5 H11" stroke="#424242" stroke-width="1.2"/></svg><div style="position:absolute;left:1432px;top:115.3px;width:68.4px;height:116.5px;border:4.7px solid #0070d8;box-sizing:border-box"></div><svg style="left:1370px;top:245px;" width="70" height="100" viewBox="0 0 70 100"><path d="M6.5 94 L47 26" stroke="#0070d8" stroke-width="5" stroke-linecap="butt"/><path d="M61.7 3.9 L34.8 22.3 L57.5 36 Z" fill="#0070d8"/></svg><div style="position:absolute;left:1204px;top:291.2px;width:143.6px;height:136.5px;background:#245e36;border:2px solid #5a5a5a;box-sizing:border-box"></div><div style="position:absolute;left:1206px;top:342px;width:140px;height:2px;background:#5a5a5a"></div><span id="t141" style="position:absolute;top:300.60px;font-size:15px;line-height:15px;color:#fff;font-weight:700;white-space:nowrap;font-family:'Liberation Sans', sans-serif;left:1216px;transform:scaleX(0.9256);transform-origin:left;">Select  report year</span><span id="t142" style="position:absolute;top:317.30px;font-size:15px;line-height:15px;color:#fff;font-weight:700;white-space:nowrap;font-family:'Liberation Sans', sans-serif;left:1216px;transform:scaleX(0.9293);transform-origin:left;">in Cell L2</span><span id="t143" style="position:absolute;top:359.60px;font-size:15px;line-height:15px;color:#fff;font-weight:700;white-space:nowrap;font-family:'Liberation Sans', sans-serif;left:1216px;transform:scaleX(0.9181);transform-origin:left;">To edit data, select</span><span id="t144" style="position:absolute;top:376.30px;font-size:15px;line-height:15px;color:#fff;font-weight:700;white-space:nowrap;font-family:'Liberation Sans', sans-serif;left:1216px;transform:scaleX(0.9244);transform-origin:left;">the Financial Data</span><span id="t145" style="position:absolute;top:393.50px;font-size:15px;line-height:15px;color:#fff;font-weight:700;white-space:nowrap;font-family:'Liberation Sans', sans-serif;left:1216px;transform:scaleX(0.9245);transform-origin:left;">Input sheet</span></body></html>
